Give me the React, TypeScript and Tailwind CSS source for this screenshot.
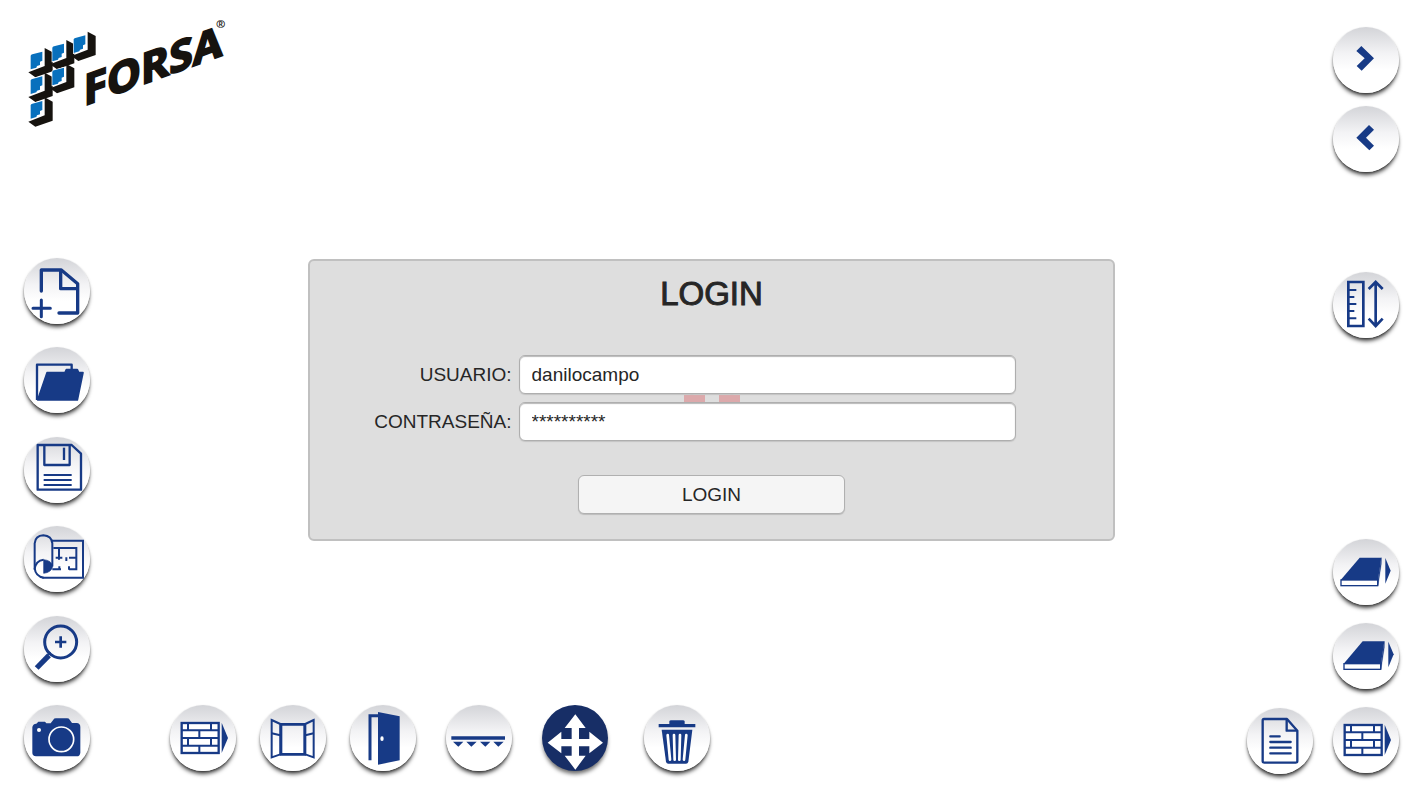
import type { ReactNode } from 'react';

const NAVY = '#173a86';

interface IconProps {
  viewBox: string;
  children: ReactNode;
}

function Icon({ viewBox, children }: IconProps) {
  return (
    <svg viewBox={viewBox} className="block w-full h-full" fill="none" stroke={NAVY} aria-hidden="true">
      {children}
    </svg>
  );
}

interface RoundButtonProps {
  label: string;
  active?: boolean;
  children: ReactNode;
}

function RoundButton({ label, active = false, children }: RoundButtonProps) {
  return (
    <button
      type="button"
      aria-label={label}
      className={`block shrink-0 w-[66px] h-[66px] rounded-full cursor-pointer ${
        active
          ? 'bg-[#172e66] shadow-[0_4px_4px_-1px_rgba(0,0,0,0.6)]'
          : 'bg-linear-to-b from-[#d3d4d8] via-[#f3f3f5] via-40% to-white to-65% shadow-[0_4px_4px_-1px_rgba(0,0,0,0.75),0_1px_2px_rgba(0,0,0,0.3)]'
      }`}
    >
      {children}
    </button>
  );
}

function NewFileIcon() {
  return (
    <Icon viewBox="43 38 198 198">
      <g strokeWidth="10" strokeLinecap="round" strokeLinejoin="round">
        <path d="M95 137V74H155L204 115V203H148" />
        <path d="M153 76V130H202" />
        <path d="M95 164V214M70 189H122" strokeWidth="9" />
      </g>
    </Icon>
  );
}

function FolderIcon() {
  return (
    <Icon viewBox="43 305 198 198">
      <path d="M82 464V358H186V374" strokeWidth="7" strokeLinejoin="round" />
      <path d="M84 464L112 382H166L170 373H203L207 382H220L203 464Z" fill={NAVY} strokeWidth="5" strokeLinejoin="round" />
    </Icon>
  );
}

function SaveIcon() {
  return (
    <Icon viewBox="43 37 198 198">
      <g strokeWidth="7" strokeLinejoin="round">
        <path d="M84 61H186L214 87V195H84Z" />
        <path d="M104 62V121H180V62" />
        <path d="M163 69V106" />
        <path d="M102 151H186M102 166H186M102 181H186" strokeWidth="6" />
      </g>
    </Icon>
  );
}

function PlanIcon() {
  return (
    <Icon viewBox="43 303 198 198">
      <g strokeWidth="6">
        <path d="M127 347H220V458H98" />
        <path d="M75 434V355Q77 332 101 331Q126 333 128 355V424" />
        <path d="M75 432Q78 407 102 404M75 430Q78 454 102 458" />
        <path d="M102 445V404Q126 406 129 424Q126 442 102 445Z" fill={NAVY} strokeWidth="2" />
        <path d="M131 369H200V433H178M128 433H154M148 370V404M138 398H158M178 398H198M170 397V408M149 424V434M178 424V434" />
      </g>
    </Icon>
  );
}

function ZoomIcon() {
  return (
    <Icon viewBox="41 33 198 198">
      <circle cx="151" cy="111" r="48" strokeWidth="9" />
      <path d="M134 111H168M151 94V128" strokeWidth="8" />
      <path d="M116 151L79 189" strokeWidth="16" />
      <path d="M113 149L120 141" strokeWidth="6" />
    </Icon>
  );
}

function CameraIcon() {
  return (
    <Icon viewBox="41 299 198 198">
      <path
        d="M78 355L84 349H104L108 354H121L129 343Q131 339 137 339H170Q176 339 178 343L185 353H199Q210 354 210 365V442Q209 453 199 453H77Q66 452 66 442V366Q67 356 78 355Z"
        fill={NAVY}
        stroke="none"
      />
      <circle cx="153" cy="402" r="37" stroke="white" strokeWidth="5" />
      <circle cx="86" cy="374" r="6" fill="white" stroke="none" />
    </Icon>
  );
}

function WallIcon() {
  return (
    <Icon viewBox="31 29 198 198">
      <rect x="66" y="83" width="111" height="90" fill="white" strokeWidth="7" />
      <path
        d="M66 105H177M66 128H177M66 151H177M85 83V105M154 83V105M119 105V128M85 128V151M154 128V151M119 151V173"
        strokeWidth="6"
      />
      <path d="M186 82L205 128L186 173Z" fill={NAVY} stroke="none" />
    </Icon>
  );
}

function WindowIcon() {
  return (
    <Icon viewBox="301 29 198 198">
      <path d="M364 87H435V177H364Z" strokeWidth="8" />
      <path d="M336 74L362 86V177L336 186ZM462 74L437 86V177L462 186Z" strokeWidth="6" />
      <path d="M336 114L362 120M462 114L437 120" strokeWidth="6" />
    </Icon>
  );
}

function DoorIcon() {
  return (
    <Icon viewBox="571 29 198 198">
      <path d="M655 61H631V195" strokeWidth="9" />
      <path d="M655 50L720 63V195L655 208Z" fill={NAVY} stroke="none" />
      <ellipse cx="667" cy="130" rx="5" ry="7" fill="white" stroke="none" />
    </Icon>
  );
}

function RailingIcon() {
  return (
    <Icon viewBox="49 29 198 198">
      <path d="M65 128H226" strokeWidth="10" />
      <path
        d="M70 139H101L86 154ZM110 139H141L125 154ZM151 139H182L167 154ZM191 139H222L206 154Z"
        fill={NAVY}
        stroke="none"
      />
    </Icon>
  );
}

function MoveIcon() {
  return (
    <Icon viewBox="335 29 198 198">
      <path
        d="M435 57L466 98H446V131H477V109L518 142L477 174V153H446V181H466L435 223L403 181H424V153H393V174L352 142L393 109V131H424V98H403Z"
        fill="white"
        stroke="none"
      />
    </Icon>
  );
}

function TrashIcon() {
  return (
    <Icon viewBox="644 29 198 198">
      <path d="M688 86H720V78Q721 75 725 75H761Q765 75 766 78V86H798V96H688Z" fill={NAVY} stroke="none" />
      <path d="M697 103H789L777 199Q776 205 770 205H717Q711 205 710 199Z" fill={NAVY} stroke="none" />
      <path d="M715 119L722 193M734 119L736 193M752 119L750 193M771 119L764 193" stroke="white" strokeWidth="8" strokeLinecap="round" />
    </Icon>
  );
}

function NextIcon() {
  return (
    <Icon viewBox="40 37 198 198">
      <path d="M110 109L125 94L163 131L126 168L111 154L135 131Z" fill={NAVY} stroke="none" />
    </Icon>
  );
}

function PreviousIcon() {
  return (
    <Icon viewBox="40 271 198 198">
      <path d="M163 342L148 328L110 366L149 404L163 390L139 366Z" fill={NAVY} stroke="none" />
    </Icon>
  );
}

function RulerIcon() {
  return (
    <Icon viewBox="40 40 198 198">
      <path d="M86 70H131V202H86Z" strokeWidth="8" />
      <path d="M88 94H110M88 115H104M88 136H110M88 157H104M88 179H110" strokeWidth="6" />
      <path d="M168 74V199M147 91L168 70L189 91M147 180L168 202L189 180" strokeWidth="8" />
    </Icon>
  );
}

function SlabIcon({ viewBox }: { viewBox: string }) {
  return (
    <Icon viewBox={viewBox}>
      <path d="M64 153L121 86H186L176 153Z" fill={NAVY} stroke="none" />
      <path d="M186 86V104L176 170V152Z" fill={NAVY} strokeWidth="1" />
      <rect x="65" y="153" width="110" height="17" fill="white" strokeWidth="4" />
      <path d="M198 87L214 125L198 164Z" fill={NAVY} stroke="none" />
    </Icon>
  );
}

function ReportIcon() {
  return (
    <Icon viewBox="36 37 198 198">
      <g strokeWidth="7" strokeLinejoin="round">
        <path d="M87 70H156L187 105V196Q187 201 182 201H88Q83 201 83 196V75Q83 70 87 70Z" />
        <path d="M155 72V105H186" />
        <path d="M106 122H134M106 139H167M106 156H167M106 173H167" strokeLinecap="round" />
      </g>
    </Icon>
  );
}

const tiles = [
  [62, 152],
  [127, 128],
  [191, 103],
  [62, 226],
  [127, 200],
  [62, 300],
];

function Logo() {
  return (
    <svg
      viewBox="51 42 600 324"
      className="block w-[200px] max-w-none shrink-0 overflow-visible"
      role="img"
      aria-label="FORSA"
    >
      {tiles.map(([x, y]) => (
        <path
          key={`edge-${x}-${y}`}
          d={`M${x + 42} ${y - 23}L${x + 66} ${y - 10}V${y + 47}L${x + 14} ${y + 65}L${x - 7} ${y + 50}L${x + 42} ${y + 31}Z`}
          fill="#16130f"
        />
      ))}
      {tiles.map(([x, y]) => (
        <path
          key={`tile-${x}-${y}`}
          d={`M${x} ${y}Q${x + 1} ${y - 3} ${x + 5} ${y - 4}L${x + 35} ${y - 12}V${y + 15}L${x + 28} ${y + 18}V${y + 28}L${x + 19} ${y + 31}L${x + 17} ${y + 36}L${x} ${y + 41}Z`}
          fill="#0870bd"
          stroke="white"
          strokeWidth="4"
          paintOrder="stroke"
        />
      ))}
      <text
        transform="translate(221 303) skewY(-20)"
        fontFamily="'Open Sans', sans-serif"
        fontWeight="700"
        fontSize="128"
        fill="#16130f"
        stroke="#16130f"
        strokeWidth="6"
      >
        FORSA
      </text>
      <text x="618" y="70" fontFamily="'Open Sans', sans-serif" fontWeight="700" fontSize="34" fill="#16130f">
        ®
      </text>
    </svg>
  );
}

const fieldClass =
  'relative w-full h-[39px] px-3 rounded-md bg-white border border-[#aeaeae] shadow-[inset_0_1px_1px_#b8b8b8,0_1px_1px_#c4c4c4] text-[19px] text-[#262626] outline-none';

function LoginForm() {
  return (
    <form
      onSubmit={(e) => e.preventDefault()}
      className="w-[65%] justify-self-center flex flex-col items-center pt-[13px] pb-[25px] rounded-md bg-[#dedede] border-2 border-[#c0c0c0] text-[19px] text-[#262626]"
    >
      <h1 className="text-[33px] leading-[40px] [-webkit-text-stroke:1px_#262626]">LOGIN</h1>
      <div className="relative w-full mt-[41px] pr-[97px] grid grid-cols-[202px_1fr] items-center gap-x-[7px] gap-y-2">
        {/* columns of the 3D scene that show through the panel */}
        <svg viewBox="0 0 56 10" className="absolute left-1/2 top-[38px] w-14 h-[10px] -translate-x-1/2" aria-hidden="true">
          <path d="M0 2H6L8 0L10 2H21V10H0ZM35 2H46L48 0L50 2H56V10H35Z" fill="#dca9ab" />
        </svg>
        <label htmlFor="usuario" className="pt-0.5 text-right">USUARIO:</label>
        <input id="usuario" type="text" defaultValue="danilocampo" className={fieldClass} />
        <label htmlFor="contrasena" className="pt-0.5 text-right">CONTRASEÑA:</label>
        <input id="contrasena" type="text" autoComplete="off" defaultValue="**********" className={fieldClass} />
      </div>
      <button
        type="submit"
        className="w-1/3 h-[39px] mt-[34px] pt-0.5 rounded-md bg-[#f5f5f5] border border-[#b0b0b0] shadow-[0_1px_1px_#bcbcbc] cursor-pointer"
      >
        LOGIN
      </button>
    </form>
  );
}

export default function App() {
  return (
    <div className="flex min-h-screen bg-white font-['Liberation_Sans',Arial,sans-serif]">
      <aside className="w-[90px] shrink-0 flex flex-col pt-[19px] pb-[29px]">
        <div className="pl-[27px]">
          <Logo />
        </div>
        <nav className="flex-1 flex flex-col justify-between gap-2 pl-6 pt-[131px]">
          <RoundButton label="Nuevo"><NewFileIcon /></RoundButton>
          <RoundButton label="Abrir"><FolderIcon /></RoundButton>
          <RoundButton label="Guardar"><SaveIcon /></RoundButton>
          <RoundButton label="Plano"><PlanIcon /></RoundButton>
          <RoundButton label="Zoom"><ZoomIcon /></RoundButton>
          <RoundButton label="Cámara"><CameraIcon /></RoundButton>
        </nav>
      </aside>

      <main className="flex-1 min-w-0 grid grid-rows-[1fr_auto_1fr] py-[26px]">
        <div />
        <LoginForm />
        <footer className="self-end flex justify-between items-end pl-20 pr-5">
          <div className="flex items-center gap-[30px] pb-[3px]">
            <div className="flex gap-6">
              <RoundButton label="Muro"><WallIcon /></RoundButton>
              <RoundButton label="Ventana"><WindowIcon /></RoundButton>
              <RoundButton label="Puerta"><DoorIcon /></RoundButton>
            </div>
            <RoundButton label="Baranda"><RailingIcon /></RoundButton>
            <div className="flex gap-9">
              <RoundButton label="Mover" active><MoveIcon /></RoundButton>
              <RoundButton label="Eliminar"><TrashIcon /></RoundButton>
            </div>
          </div>
          <RoundButton label="Reporte"><ReportIcon /></RoundButton>
        </footer>
      </main>

      <aside className="w-[89px] shrink-0 flex flex-col pt-[27px] pb-[27px]">
        <div className="flex flex-col gap-[13px]">
          <RoundButton label="Siguiente"><NextIcon /></RoundButton>
          <RoundButton label="Anterior"><PreviousIcon /></RoundButton>
        </div>
        <div className="flex-1" />
        <RoundButton label="Medidas"><RulerIcon /></RoundButton>
        <div className="flex-2" />
        <div className="flex flex-col gap-[18px]">
          <RoundButton label="Losa inferior"><SlabIcon viewBox="41 30 198 198" /></RoundButton>
          <RoundButton label="Losa superior"><SlabIcon viewBox="32 31 198 198" /></RoundButton>
          <RoundButton label="Muros"><WallIcon /></RoundButton>
        </div>
      </aside>
    </div>
  );
}
